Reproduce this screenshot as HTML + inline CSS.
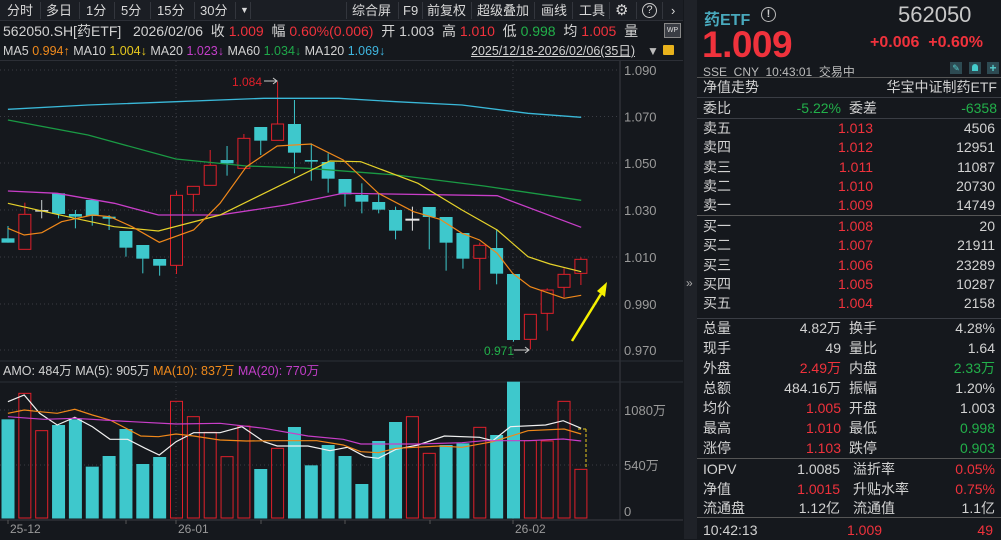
<!DOCTYPE html>
<html><head><meta charset="utf-8"><style>
*{margin:0;padding:0;box-sizing:border-box}
body{width:1001px;height:539px;background:#15181d;color:#d2d2d2;font-family:"Liberation Sans","Noto Sans CJK SC",sans-serif;font-size:13px;position:relative;overflow:hidden}
.a{position:absolute;white-space:nowrap}
.r{color:#f0323c}.g{color:#22b04a}.o{color:#f08a1c}.y{color:#e6c81e}.m{color:#c23ec8}.c{color:#3fb6e0}.gn{color:#1fa84a}
.tab{position:absolute;top:0;height:21px;line-height:21px;font-size:13px;color:#d8d8d8}
.sep{position:absolute;top:2px;width:1px;height:17px;background:#33363d}
.row{position:absolute;left:697px;width:304px;height:20px;line-height:20px;font-size:14px}
.row span{position:absolute}
</style></head><body>
<div class="a" style="left:0;top:0;width:683px;height:21px;background:#1b1e24;border-bottom:1px solid #2c2f36"></div>
<div class="tab" style="left:7px">分时</div><div class="sep" style="left:40px"></div>
<div class="tab" style="left:46px">多日</div><div class="sep" style="left:79px"></div>
<div class="tab" style="left:86px">1分</div><div class="sep" style="left:114px"></div>
<div class="tab" style="left:121px">5分</div><div class="sep" style="left:150px"></div>
<div class="tab" style="left:157px">15分</div><div class="sep" style="left:194px"></div>
<div class="tab" style="left:200px">30分</div><div class="sep" style="left:235px"></div>
<div class="tab" style="left:240px;font-size:9px">▼</div><div class="sep" style="left:250px"></div>
<div class="sep" style="left:346px"></div><div class="tab" style="left:352px">综合屏</div><div class="sep" style="left:398px"></div>
<div class="tab" style="left:403px">F9</div><div class="sep" style="left:422px"></div>
<div class="tab" style="left:427px">前复权</div><div class="sep" style="left:471px"></div>
<div class="tab" style="left:477px">超级叠加</div><div class="sep" style="left:534px"></div>
<div class="tab" style="left:541px">画线</div><div class="sep" style="left:572px"></div>
<div class="tab" style="left:579px">工具</div><div class="sep" style="left:609px"></div>
<div class="tab" style="left:615px;font-size:15px">⚙</div><div class="sep" style="left:636px"></div>
<div class="a" style="left:642px;top:3px;width:15px;height:15px;border:1.5px solid #ccc;border-radius:50%;font-size:11px;line-height:12px;text-align:center">?</div><div class="sep" style="left:662px"></div>
<div class="tab" style="left:671px">›</div>
<div class="a" style="left:3px;top:22px;font-size:14px;line-height:18px">562050.SH[药ETF] &nbsp; 2026/02/06 &nbsp;收 <span class="r">1.009</span> &nbsp;幅 <span class="r">0.60%(0.006)</span> &nbsp;开 1.003 &nbsp;高 <span class="r">1.010</span> &nbsp;低 <span class="g">0.998</span> &nbsp;均 <span class="r">1.005</span> &nbsp;量</div>
<div class="a" style="left:664px;top:23px;width:17px;height:15px;background:#3a3d44;border:1px solid #888;font-size:7px;line-height:13px;text-align:center;color:#ddd">WP</div>
<div class="a" style="left:3px;top:42px;font-size:12.5px;line-height:18px">MA5 <span class="o">0.994↑</span> MA10 <span class="y">1.004↓</span> MA20 <span class="m">1.023↓</span> MA60 <span class="gn">1.034↓</span> MA120 <span class="c">1.069↓</span></div>
<div class="a" style="left:471px;top:42px;font-size:12.5px;line-height:18px;text-decoration:underline">2025/12/18-2026/02/06(35日)</div>
<div class="a" style="left:647px;top:44px;font-size:12px;color:#bbb">▼</div>
<div class="a" style="left:663px;top:45px;width:11px;height:10px;background:#e8b21c;border-radius:1px"></div>
<div class="a" style="left:0;top:60px;width:683px;height:1px;background:#2c2f36"></div>
<div class="a" style="left:3px;top:362px;font-size:12.5px;line-height:18px">AMO: 484万 MA(5): 905万 <span class="o">MA(10): 837万</span> <span class="m">MA(20): 770万</span></div>
<svg class="a" style="left:0;top:0" width="683" height="539" id="sv"></svg>
<div class="a" style="left:684px;top:0;width:13px;height:539px;background:#1f2228"></div>
<div class="a" style="left:686px;top:276px;font-size:12px;color:#aaa">»</div>
<div class="a" style="left:704px;top:6px;font-size:16px;font-weight:bold;color:#49a9bd">药ETF</div>
<div class="a" style="left:761px;top:7px;width:15px;height:15px;border:1.5px solid #bbb;border-radius:50%;font-size:11px;line-height:12px;text-align:center;color:#ccc;font-weight:bold">!</div>
<div class="a" style="left:898px;top:2px;font-size:22px;color:#c8c8c8">562050</div>
<div class="a" style="left:702px;top:24px;font-size:37px;font-weight:bold;color:#f0323c;letter-spacing:-0.5px">1.009</div>
<div class="a" style="left:870px;top:34px;font-size:16px;font-weight:bold;color:#f0323c">+0.006 &nbsp;+0.60%</div>
<div class="a" style="left:703px;top:63px;font-size:12px;color:#bbb">SSE &nbsp;CNY &nbsp;10:43:01 &nbsp;交易中</div>
<div class="a" style="left:950px;top:62px;width:12px;height:12px;background:#2d4a52;color:#5cc;font-size:9px;text-align:center;line-height:12px">✎</div>
<div class="a" style="left:969px;top:62px;width:12px;height:12px;background:#2d4a52"></div><div class="a" style="left:972px;top:64px;width:6px;height:7px;background:#4cc;border-radius:3px 3px 0 0"></div>
<div class="a" style="left:987px;top:62px;width:12px;height:12px;background:#2d4a52;color:#5cc;font-size:12px;text-align:center;line-height:12px;font-weight:bold">+</div>
<div class="a" style="left:697px;top:77px;width:304px;height:1px;background:#555"></div>
<div class="row" style="top:77px"><span style="left:6px">净值走势</span><span style="right:4px">华宝中证制药ETF</span></div>
<div class="a" style="left:697px;top:97px;width:304px;height:1px;background:#3a3d44"></div>
<div class="row" style="top:98px"><span style="left:6px">委比</span><span class="g" style="right:160px">-5.22%</span><span style="left:152px">委差</span><span class="g" style="right:4px">-6358</span></div>
<div class="a" style="left:697px;top:118px;width:304px;height:1px;background:#3a3d44"></div>
<div id="ob"></div>
<div class="a" style="left:697px;top:215px;width:304px;height:1px;background:#555"></div>
<div class="a" style="left:697px;top:318px;width:304px;height:1px;background:#3a3d44"></div>
<div class="a" style="left:697px;top:458px;width:304px;height:1px;background:#555"></div>
<div class="a" style="left:697px;top:517px;width:304px;height:1px;background:#555"></div>
<div class="row" style="top:520px"><span style="left:6px">10:42:13</span><span class="r" style="left:150px">1.009</span><span class="r" style="right:8px">49</span></div>
<script>
var ob=document.getElementById('ob'),h='';
var ask=[['卖五','1.013','4506'],['卖四','1.012','12951'],['卖三','1.011','11087'],['卖二','1.010','20730'],['卖一','1.009','14749']];
var bid=[['买一','1.008','20'],['买二','1.007','21911'],['买三','1.006','23289'],['买四','1.005','10287'],['买五','1.004','2158']];
ask.forEach(function(r,i){h+='<div class="row" style="top:'+(118+i*19.3)+'px"><span style="left:6px">'+r[0]+'</span><span class="r" style="right:128px">'+r[1]+'</span><span style="right:6px">'+r[2]+'</span></div>';});
bid.forEach(function(r,i){h+='<div class="row" style="top:'+(216+i*19.3)+'px"><span style="left:6px">'+r[0]+'</span><span class="r" style="right:128px">'+r[1]+'</span><span style="right:6px">'+r[2]+'</span></div>';});
var st=[['总量','4.82万','','换手','4.28%',''],['现手','49','','量比','1.64',''],['外盘','2.49万','r','内盘','2.33万','g'],['总额','484.16万','','振幅','1.20%',''],['均价','1.005','r','开盘','1.003',''],['最高','1.010','r','最低','0.998','g'],['涨停','1.103','r','跌停','0.903','g']];
st.forEach(function(r,i){h+='<div class="row" style="top:'+(318+i*20)+'px"><span style="left:6px">'+r[0]+'</span><span class="'+r[2]+'" style="right:160px">'+r[1]+'</span><span style="left:152px">'+r[3]+'</span><span class="'+r[5]+'" style="right:6px">'+r[4]+'</span></div>';});
var s2=[['IOPV','1.0085','','溢折率','0.05%','r'],['净值','1.0015','r','升贴水率','0.75%','r'],['流通盘','1.12亿','','流通值','1.1亿','']];
s2.forEach(function(r,i){h+='<div class="row" style="top:'+(459+i*19.5)+'px"><span style="left:6px">'+r[0]+'</span><span class="'+r[2]+'" style="right:161px">'+r[1]+'</span><span style="left:156px">'+r[3]+'</span><span class="'+r[5]+'" style="right:6px">'+r[4]+'</span></div>';});
ob.innerHTML=h;
var s='';
function L(x1,y1,x2,y2,c,w,d){s+='<line x1="'+x1+'" y1="'+y1+'" x2="'+x2+'" y2="'+y2+'" stroke="'+c+'" stroke-width="'+(w||1)+'"'+(d?' stroke-dasharray="'+d+'"':'')+'/>';}
function T(x,y,t,c,fs){s+='<text x="'+x+'" y="'+y+'" fill="'+c+'" font-size="'+(fs||13)+'" font-family="Liberation Sans,Noto Sans CJK SC,sans-serif">'+t+'</text>';}
var lv=[70,116.5,163,210,257,304,350];var lb=['1.090','1.070','1.050','1.030','1.010','0.990','0.970'];
lv.forEach(function(y,i){L(0,y,620,y,'#3a3d44',1,'1,3');T(624,y+5,lb[i],'#9a9a9a');});
L(176,61,176,360,'#3a3d44',1,'1,3');L(513,61,513,360,'#3a3d44',1,'1,3');
L(620,61,620,520,'#3a3d44');
L(0,361,683,361,'#2c2f36');L(0,382,683,382,'#2c2f36');
L(176,382,176,520,'#3a3d44',1,'1,3');L(513,382,513,520,'#3a3d44',1,'1,3');
[410,465].forEach(function(y){L(0,y,620,y,'#3a3d44',1,'1,3');});
T(624,415,'1080万','#9a9a9a');T(624,470,'540万','#9a9a9a');T(624,516,'0','#9a9a9a');
L(0,520,683,520,'#3a3d44');
[8,126,176,261,345,430,513].forEach(function(x){L(x,520,x,524,'#555');});
T(10,533,'25-12','#9a9a9a',12);T(178,533,'26-01','#9a9a9a',12);T(515,533,'26-02','#9a9a9a',12);
function P(a,c,w,sy,oy){var p=a.map(function(q){return (q[0]*0.44).toFixed(1)+','+(q[1]/3+oy).toFixed(1)}).join(' ');s+='<polyline points="'+p+'" fill="none" stroke="'+c+'" stroke-width="'+(w||1)+'"/>';}
var C=[[535,548,498,548,0],[463,568,428,568,1],[450,455,420,475,2],[400,462,400,475,0],[462,470,450,505,0],[420,468,420,497,0],[470,476,465,510,0],[513,563,513,590,0],[555,596,555,640,0],[597,617,597,647,0],[406,616,392,642,1],[379,403,379,455,1],[316,376,270,376,1],[300,310,258,347,0],[235,325,222,325,1],[201,242,201,285,0],[192,241,65,241,1],[192,278,120,340,0],[300,305,250,362,0],[306,356,280,398,0],[357,403,357,440,0],[405,425,370,460,0],[426,449,400,460,0],[450,512,440,538,0],[476,480,440,512,3],[441,471,441,568,0],[471,548,471,632,0],[519,596,519,626,0],[556,595,548,690,1],[564,641,507,673,0],[642,840,642,845,0],[763,838,763,868,1],[690,760,685,812,1],[643,682,625,712,1],[598,640,592,675,1]];
var V=[178,100,212,195,178,320,288,207,312,291,124,170,217,290,198,327,265,201,316,255,288,372,243,186,170,280,255,250,202,225,65,242,243,124,328];
var VR={1:1,2:1,10:1,11:1,12:1,13:1,14:1,16:1,24:1,25:1,28:1,31:1,32:1,33:1,34:1};
C.forEach(function(c,i){var x=8+i*16.85;var bt=c[0]/3+60,bb=c[1]/3+60,wt=c[2]/3+60,wb=c[3]/3+60;
 var col=c[4]==0?'#3ec8cc':(c[4]==3?'#e8e8e8':'#e0202a');
 if(c[4]==2)col='#c8d0d0';
 L(x,wt,x,wb,col);
 if(c[4]==1){s+='<rect x="'+(x-6)+'" y="'+bt+'" width="12" height="'+Math.max(bb-bt,1)+'" fill="#15181d" stroke="'+col+'"/>';}
 else if(c[4]==3){L(x-7,bt+1,x+7,bt+1,col,2);}
 else s+='<rect x="'+(x-6.5)+'" y="'+bt+'" width="13" height="'+Math.max(bb-bt,1.5)+'" fill="'+col+'"/>';
 var vt=360+V[i]/3;
 if(VR[i])s+='<rect x="'+(x-6)+'" y="'+vt+'" width="12" height="'+(518-vt)+'" fill="none" stroke="#e0202a"/>';
 else s+='<rect x="'+(x-6.5)+'" y="'+vt+'" width="13" height="'+(518.5-vt)+'" fill="#3ec8cc"/>';
});
P([[18,148],[200,135],[400,125],[600,115],[770,115],[900,125],[1050,135],[1200,160],[1321,172]],'#3ab8d8',1.3,0,60);
P([[18,180],[200,225],[400,297],[560,318],[700,325],[900,345],[1100,378],[1321,421]],'#1a9a44',1.3,0,60);
P([[18,393],[130,400],[260,430],[360,465],[500,465],[650,435],[780,400],[1130,407],[1321,502]],'#c83ec8',1.3,0,60);
P([[18,430],[170,475],[260,500],[360,513],[500,465],[750,303],[820,305],[950,370],[1050,450],[1130,510],[1200,590],[1250,612],[1321,635]],'#e6d22a',1.2,0,60);
P([[18,505],[55,525],[95,518],[140,485],[210,465],[250,470],[300,500],[362,547],[440,510],[500,430],[560,320],[630,258],[707,252],[780,300],[860,400],[940,455],[1000,478],[1050,520],[1090,540],[1130,580],[1165,640],[1205,680],[1282,715],[1321,706]],'#f0881a',1.2,0,60);
P([[18,125],[55,105],[90,160],[130,195],[170,172],[210,200],[250,238],[290,238],[330,265],[362,285],[400,245],[440,218],[500,218],[550,200],[600,245],[630,258],[700,258],[750,272],[790,262],[830,290],[860,295],[900,268],[950,255],[1010,228],[1090,232],[1120,242],[1160,200],[1240,195],[1280,182],[1321,205]],'#f0f0f0',1.2,0,360);
P([[18,160],[55,150],[90,155],[130,160],[170,148],[210,165],[250,180],[320,228],[360,230],[400,222],[440,228],[500,240],[560,243],[620,242],[720,242],[780,255],[820,275],[860,278],[900,265],[1000,258],[1050,262],[1120,245],[1200,212],[1282,207],[1321,222]],'#f0881a',1.2,0,360);
P([[18,170],[100,178],[170,175],[300,185],[400,192],[500,190],[600,205],[700,228],[780,238],[820,252],[950,252],[1050,248],[1100,242],[1200,242],[1280,237],[1321,243]],'#c83ec8',1.2,0,360);
L(586,429,586,468,'#e6c81e',1,'3,2');L(578,429,586,429,'#e6c81e',1,'3,2');
T(232,86,'1.084','#e0202a',12);L(264,81,276,81,'#ccc');s+='<path d="M273,78 L277,81 L273,84" stroke="#ccc" fill="none"/>';
T(484,355,'0.971','#22b04a',12);L(514,350,528,350,'#ccc');s+='<path d="M525,347 L529,350 L525,353" stroke="#ccc" fill="none"/>';
L(572,341,601,294,'#f5f000',2.5);s+='<polygon points="607,282 597,291 605,297" fill="#f5f000"/>';
document.getElementById('sv').innerHTML=s;
</script>
</body></html>
